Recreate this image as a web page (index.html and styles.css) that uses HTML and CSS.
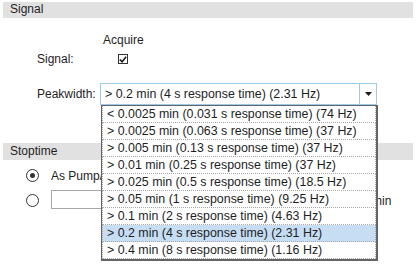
FILE: index.html
```html
<!DOCTYPE html>
<html>
<head>
    <title>Signal settings</title>
    <link rel="stylesheet" href="styles.css">
</head>
<body>
    <div class="section-header">Signal</div>
    <div class="signal-grid">
        <div></div>
        <div class="col-head">Acquire</div>
        <div class="label">Signal:</div>
        <div class="check-cell"><span class="checkbox"><svg width="9" height="9" viewBox="0 0 9 9"><path d="M1 4.5 L3.5 7 L8 1.5" fill="none" stroke="#1a1a1a" stroke-width="1.8"/></svg></span></div>
    </div>
    <div class="peak-row">
        <div class="label">Peakwidth:</div>
        <div class="combo">
            <div class="combo-value">&gt; 0.2 min (4 s response time) (2.31 Hz)</div>
            <div class="combo-button"><svg width="7" height="4" viewBox="0 0 7 4"><path d="M0 0 H7 L3.5 4 Z" fill="#1a1a1a"/></svg></div>
            <ul class="dropdown">
                <li>&lt; 0.0025 min (0.031 s response time) (74 Hz)</li>
                <li>&gt; 0.0025 min (0.063 s response time) (37 Hz)</li>
                <li>&gt; 0.005 min (0.13 s response time) (37 Hz)</li>
                <li>&gt; 0.01 min (0.25 s response time) (37 Hz)</li>
                <li>&gt; 0.025 min (0.5 s response time) (18.5 Hz)</li>
                <li>&gt; 0.05 min (1 s response time) (9.25 Hz)</li>
                <li>&gt; 0.1 min (2 s response time) (4.63 Hz)</li>
                <li class="selected">&gt; 0.2 min (4 s response time) (2.31 Hz)</li>
                <li>&gt; 0.4 min (8 s response time) (1.16 Hz)</li>
            </ul>
        </div>
    </div>
    <div class="section-header stoptime">Stoptime</div>
    <div class="radio-row">
        <span class="radio checked"></span>
        <span>As Pump/Injector</span>
    </div>
    <div class="radio-row">
        <span class="radio"></span>
        <span class="text-box"></span>
        <span>min</span>
    </div>
</body>
</html>
```

FILE: styles.css
```css
html, body {
    height: 100%;
}
body {
    margin: 0;
    min-height: 265px;
    background: #fff;
    font-family: "Liberation Sans", Arial, sans-serif;
    font-size: 12px;
    color: #1e1e1e;
}
.section-header {
    margin: 2px 4px 0 3px;
    height: 16px;
    line-height: 15px;
    padding-left: 7px;
    background-color: #e1e1e2;
}
.signal-grid {
    display: grid;
    grid-template-columns: 63px 42px;
    margin: 15px 0 0 37px;
    row-gap: 5px;
}
.col-head {
    padding-left: 3px;
    height: 14px;
}
.check-cell {
    padding-left: 18px;
}
.checkbox {
    display: flex;
    align-items: center;
    justify-content: center;
    width: 8px;
    height: 8px;
    border: 1px solid #333;
    margin-top: 2px;
}
.peak-row {
    display: flex;
    align-items: center;
    margin: 17px 0 0 37px;
}
.peak-row .label {
    width: 63px;
}
.combo {
    position: relative;
    display: flex;
    width: 275px;
    height: 20px;
    border: 1px solid #9ccbea;
    font-size: 12.4px;
}
.combo-value {
    flex: 1;
    padding-left: 4px;
    line-height: 20px;
}
.combo-button {
    width: 16px;
    border-left: 1px solid #9ccbea;
    display: flex;
    align-items: center;
    justify-content: center;
}
.dropdown {
    position: absolute;
    top: 21px;
    left: 0;
    width: 274px;
    margin: 0;
    padding: 0;
    list-style: none;
    background: #fff;
    border: 1px solid #646464;
    border-right-width: 2px;
    border-bottom-width: 2px;
    z-index: 1;
}
.dropdown li {
    height: 16px;
    line-height: 16px;
    padding-left: 4px;
    border: 1px dotted #a8a8a8;
    border-top: none;
}
.dropdown li.selected {
    background-color: #c6ddf4;
}
.stoptime {
    margin-top: 38px;
    height: 17px;
    line-height: 17px;
}
.radio-row {
    display: flex;
    align-items: center;
    gap: 12px;
    margin: 7px 0 0 26px;
    height: 17px;
}
.radio-row + .radio-row {
    margin-top: 8px;
}
.radio {
    position: relative;
    width: 11px;
    height: 11px;
    border: 1px solid #333;
    border-radius: 50%;
}
.radio.checked::after {
    content: "";
    position: absolute;
    left: 3px;
    top: 3px;
    width: 5px;
    height: 5px;
    border-radius: 50%;
    background: #333;
}
.text-box {
    width: 313px;
    height: 17px;
    border: 1px solid #a8a8a8;
    margin: -2px -6px 0 0;
}
```
